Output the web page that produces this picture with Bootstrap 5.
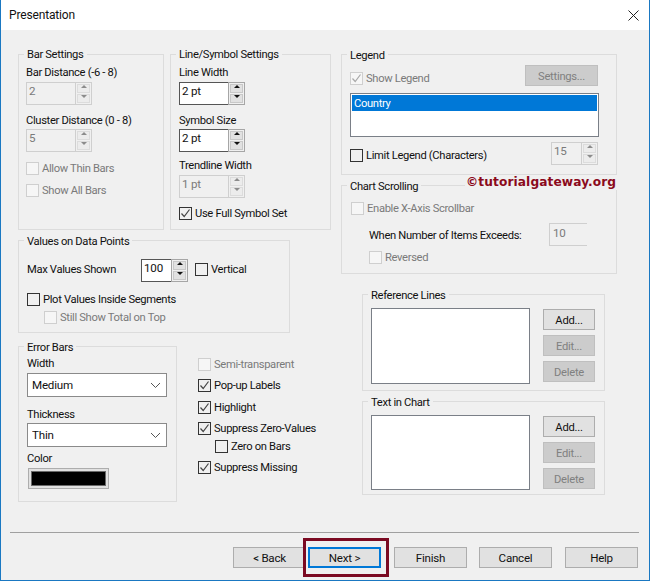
<!DOCTYPE html>
<html lang="en">
  <head>
    <meta charset="UTF-8" />
    <meta name="viewport" content="width=device-width, initial-scale=1.0" />
    <link
      rel="stylesheet"
      href="https://cdn.jsdelivr.net/npm/bootstrap@5.3.3/dist/css/bootstrap.min.css"
    />
    <title>Presentation</title>
    <style>
      html, body { margin: 0; background: #f0f0f0; }
      body { font-family: Roboto, "Liberation Sans", sans-serif; font-size: 11.2px; line-height: 16px; letter-spacing: -0.33px; color: #111; }
      .dlg { width: 650px; height: 581px; background: #f0f0f0; border: 1px solid #1a78c2; border-top: 0; overflow: hidden; }
      .dlg-head { height: 30px; background: #fff; padding: 0 10px 0 8px; }
      .dlg-title { font-size: 12px; letter-spacing: -0.15px; }
      .dlg-main { height: 502px; padding: 24px 0 0 17px; }
      .left-pane { width: 313px; }
      .right-pane { width: 276px; margin-left: 10px; }
      .grp { border: 1px solid #dcdcdc; }
      .grp-title { width: fit-content; height: 16px; margin: -8px 0 0 -3px; padding: 1px 3px 0; background: #f0f0f0; }
      .lbl { height: 16px; padding-top: 1px; white-space: nowrap; }
      .off { color: #7a7a7a; }

      .g-bar { width: 146px; height: 176px; padding-left: 7px; }
      .g-bar .grp-title { margin: -9px 0 0 -2px; }
      .g-line { width: 161px; height: 176px; margin-left: 6px; padding-left: 8px; }
      .g-line .grp-title { margin-top: -9px; }
      .g-values { width: 272px; height: 93px; margin-top: 10px; padding-left: 8px; }
      .g-error { width: 159px; height: 156px; padding-left: 8px; }
      .g-legend { height: 121px; padding-left: 8px; }
      .g-scroll { height: 89px; margin-top: 10px; padding-left: 9px; }
      .g-scroll .grp-title { margin-left: -4px; }
      .g-ref { width: 243px; height: 97px; margin: 20px 0 0 21px; padding-left: 8px; }
      .g-text { width: 243px; height: 94px; margin: 10px 0 0 21px; padding-left: 8px; }
      .error-row { margin-top: 13px; }
      .check-col { margin: 10px 0 0 21px; }

      .m1 { margin-top: 1px; }
      .m2 { margin-top: 2px; }
      .m3 { margin-top: 3px; }
      .m5 { margin-top: 5px; }
      .m6 { margin-top: 6px; }
      .m7 { margin-top: 7px; }
      .m8 { margin-top: 8px; }
      .m9 { margin-top: 9px; }
      .m10 { margin-top: 10px; }

      .chk-row { height: 16px; white-space: nowrap; }
      .chk-row span { padding-top: 2px; }
      .win-chk.form-check-input { width: 13px; height: 13px; margin: 0 3px 0 0; flex: none; border: 1px solid #333; border-radius: 0; background-color: transparent; opacity: 1; box-shadow: none; }
      .win-chk.form-check-input:checked[type=checkbox] { background-color: transparent; border-color: #333; background-size: 11px 11px; background-image: url("data:image/svg+xml,%3csvg xmlns='http://www.w3.org/2000/svg' viewBox='0 0 11 11'%3e%3cpath fill='none' stroke='%23444' stroke-width='1.2' d='M1.5 5.5l2.7 3L9.5 1.5'/%3e%3c/svg%3e"); }
      .win-chk.form-check-input:disabled { border-color: #cfcfcf; background-color: #f6f6f6; opacity: 1; }
      .win-chk.form-check-input:disabled:checked[type=checkbox] { border-color: #cfcfcf; background-color: #f6f6f6; background-image: url("data:image/svg+xml,%3csvg xmlns='http://www.w3.org/2000/svg' viewBox='0 0 11 11'%3e%3cpath fill='none' stroke='%23a8a8a8' stroke-width='1.2' d='M1.5 5.5l2.7 3L9.5 1.5'/%3e%3c/svg%3e"); }
      .chk-indent { margin-left: 18px; }
      .chk-indent-val { margin-left: 17px; }

      .spin { width: 66px; height: 23px; }
      .spin-small { width: 47px; }
      .spin-val { flex: 1; min-width: 0; width: 10px; height: 23px; padding: 0 0 5px 2px; font-size: 11.6px; letter-spacing: -0.2px; color: #111; background: #fff; border: 1px solid #555; border-right: 0; outline: 0; border-radius: 0; }
      .spin-arrows { width: 17px; height: 23px; padding: 1px; border: 1px solid #a6a6a6; background: #f0f0f0; }
      .spin-step { display: block; width: 100%; height: 9px; padding: 0; border: 1px solid #c8c8c8; background: #e1e1e1; }
      .spin-step + .spin-step { margin-top: 1px; }
      .spin-step::after { content: ""; display: block; width: 0; height: 0; margin: 0 auto; border-left: 3px solid transparent; border-right: 3px solid transparent; }
      .spin-up::after { border-bottom: 3px solid #111; }
      .spin-down::after { border-top: 3px solid #111; }
      .spin-off .spin-val { color: #7a7a7a; background: #f0f0f0; border-color: #cfcfcf; }
      .spin-off .spin-arrows { border-color: #cfcfcf; }
      .spin-off .spin-step { border-color: #dcdcdc; background: #ececec; }
      .spin-off .spin-up::after { border-bottom-color: #8c8c8c; }
      .spin-off .spin-down::after { border-top-color: #8c8c8c; }
      .spin-wide { width: 47px; }
      .exceeds-lbl { width: 180px; }
      .exceeds-box { width: 38px; height: 23px; padding: 0 0 4px 3px; font-size: 11.6px; letter-spacing: -0.2px; color: #7a7a7a; background: #f0f0f0; border: 1px solid #cfcfcf; border-right: 0; outline: 0; border-radius: 0; }

      .max-lbl { width: 114px; margin-bottom: 3px; }
      .vert-chk { margin: 0 0 3px 7px; }

      .win-select.form-select { width: 140px; height: 24px; padding: 0 20px 0 4px; font-size: 11.6px; line-height: 20px; letter-spacing: -0.2px; color: #111; background-color: #fff; background-size: 11px 7px; background-position: right 5px center; background-image: url("data:image/svg+xml,%3csvg xmlns='http://www.w3.org/2000/svg' viewBox='0 0 11 7'%3e%3cpath fill='none' stroke='%23555' stroke-width='1' d='M1 1l4.5 4.5L10 1'/%3e%3c/svg%3e"); border: 1px solid #8a8a8a; border-radius: 0; box-shadow: none; }
      .color-btn { width: 81px; height: 21px; margin: 2px 0 0 1px; padding: 2px; background: #e1e1e1; border: 1px solid #adadad; }
      .color-swatch { height: 100%; background: #000; border: 1px solid #6a6a6a; }

      .win-btn.btn { display: block; padding: 2px 0 0; font-size: 11.2px; line-height: 1; letter-spacing: -0.25px; color: #111; background: #e1e1e1; border: 1px solid #adadad; border-radius: 0; opacity: 1; }
      .win-btn.btn:disabled { color: #808080; background: #cccccc; border-color: #bfbfbf; opacity: 1; }
      .settings-btn.btn { width: 73px; height: 21px; }
      .legend-top { height: 21px; margin-top: 2px; padding-right: 18px; }
      .legend-chk { margin-top: 5px; }
      .legend-list { width: 249px; height: 44px; margin-top: 7px; padding: 1px; background: #fff; border: 1px solid #7a7f87; }
      .legend-item { height: 16px; margin: 0; padding: 1px 0 0 2px; color: #fff; background: #0078d7; }
      .legend-limit { height: 23px; margin-top: 5px; padding-right: 18px; }
      .limit-chk { margin-top: 5px; }

      .side-list { width: 159px; background: #fff; border: 1px solid #7a7f87; }
      .ref-list { height: 76px; }
      .txt-list { height: 75px; }
      .side-btns { width: 52px; margin: 1px 0 0 13px; }
      .side-btn.btn { width: 52px; height: 21px; margin-bottom: 5px; }

      .dlg-rule { height: 1px; margin: 0 10px 0 9px; background: #a0a0a0; }
      .dlg-foot { margin: 14px 0 0 232px; }
      .foot-btn.btn { width: 73px; height: 21px; font-size: 11.6px; }
      .next-btn.btn { margin: 0 13px 0 2px; border: 2px solid #0078d7; }
      .gap12 { margin-right: 12px; }
      .gap13 { margin-right: 13px; }

      .mark-box { position: absolute; left: 302px; top: 538px; width: 86px; height: 39px; border: 3px solid #7b0a22; pointer-events: none; }
      .watermark { position: absolute; left: 464px; top: 176px; height: 14px; padding: 0 2px 0 1px; font-family: "DejaVu Sans", sans-serif; font-size: 12.2px; font-weight: 700; line-height: 12px; letter-spacing: 0.1px; color: #8b0a1c; background: #f0f0f0; white-space: nowrap; }
    </style>
  </head>

  <body>
    <div class="dlg position-relative">
      <div class="dlg-head d-flex align-items-center justify-content-between">
        <span class="dlg-title">Presentation</span>
        <svg width="11" height="11" viewBox="0 0 11 11" aria-label="Close">
          <path d="M0.5 0.5L10.5 10.5M10.5 0.5L0.5 10.5" stroke="#222" stroke-width="1" fill="none" />
        </svg>
      </div>

      <div class="dlg-main d-flex">
        <div class="left-pane">
          <div class="d-flex">
            <div class="grp g-bar">
              <div class="grp-title">Bar Settings</div>
              <div class="lbl m2">Bar Distance (-6 - 8)</div>
              <div class="spin spin-off d-flex m2">
                <input class="spin-val" value="2" disabled />
                <div class="spin-arrows"><span class="spin-step spin-up"></span><span class="spin-step spin-down"></span></div>
              </div>
              <div class="lbl m7">Cluster Distance (0 - 8)</div>
              <div class="spin spin-off d-flex m1">
                <input class="spin-val" value="5" disabled />
                <div class="spin-arrows"><span class="spin-step spin-up"></span><span class="spin-step spin-down"></span></div>
              </div>
              <div class="chk-row d-flex align-items-center m8"><input type="checkbox" class="form-check-input win-chk" disabled /><span class="off">Allow Thin Bars</span></div>
              <div class="chk-row d-flex align-items-center m6"><input type="checkbox" class="form-check-input win-chk" disabled /><span class="off">Show All Bars</span></div>
            </div>

            <div class="grp g-line">
              <div class="grp-title">Line/Symbol Settings</div>
              <div class="lbl m2">Line Width</div>
              <div class="spin d-flex m2">
                <input class="spin-val" value="2 pt" />
                <div class="spin-arrows"><span class="spin-step spin-up"></span><span class="spin-step spin-down"></span></div>
              </div>
              <div class="lbl m7">Symbol Size</div>
              <div class="spin d-flex m1">
                <input class="spin-val" value="2 pt" />
                <div class="spin-arrows"><span class="spin-step spin-up"></span><span class="spin-step spin-down"></span></div>
              </div>
              <div class="lbl m5">Trendline Width</div>
              <div class="spin spin-off d-flex m2">
                <input class="spin-val" value="1 pt" disabled />
                <div class="spin-arrows"><span class="spin-step spin-up"></span><span class="spin-step spin-down"></span></div>
              </div>
              <div class="chk-row d-flex align-items-center m7"><input type="checkbox" class="form-check-input win-chk" checked /><span>Use Full Symbol Set</span></div>
            </div>
          </div>

          <div class="grp g-values">
            <div class="grp-title">Values on Data Points</div>
            <div class="d-flex align-items-center m10">
              <span class="lbl max-lbl">Max Values Shown</span>
              <div class="spin spin-small d-flex">
                <input class="spin-val" value="100" />
                <div class="spin-arrows"><span class="spin-step spin-up"></span><span class="spin-step spin-down"></span></div>
              </div>
              <div class="chk-row d-flex align-items-center vert-chk"><input type="checkbox" class="form-check-input win-chk" /><span>Vertical</span></div>
            </div>
            <div class="chk-row d-flex align-items-center m9"><input type="checkbox" class="form-check-input win-chk" /><span>Plot Values Inside Segments</span></div>
            <div class="chk-row d-flex align-items-center m2 chk-indent-val"><input type="checkbox" class="form-check-input win-chk" disabled /><span class="off">Still Show Total on Top</span></div>
          </div>

          <div class="d-flex error-row">
            <div class="grp g-error">
              <div class="grp-title">Error Bars</div>
              <div class="lbl">Width</div>
              <select class="form-select win-select m2"><option>Medium</option></select>
              <div class="lbl m9">Thickness</div>
              <select class="form-select win-select m1"><option>Thin</option></select>
              <div class="lbl m3">Color</div>
              <div class="color-btn"><div class="color-swatch"></div></div>
            </div>
            <div class="check-col">
              <div class="chk-row d-flex align-items-center"><input type="checkbox" class="form-check-input win-chk" disabled /><span class="off">Semi-transparent</span></div>
              <div class="chk-row d-flex align-items-center m5"><input type="checkbox" class="form-check-input win-chk" checked /><span>Pop-up Labels</span></div>
              <div class="chk-row d-flex align-items-center m6"><input type="checkbox" class="form-check-input win-chk" checked /><span>Highlight</span></div>
              <div class="chk-row d-flex align-items-center m5"><input type="checkbox" class="form-check-input win-chk" checked /><span>Suppress Zero-Values</span></div>
              <div class="chk-row d-flex align-items-center m2 chk-indent-val"><input type="checkbox" class="form-check-input win-chk" /><span>Zero on Bars</span></div>
              <div class="chk-row d-flex align-items-center m5"><input type="checkbox" class="form-check-input win-chk" checked /><span>Suppress Missing</span></div>
            </div>
          </div>
        </div>

        <div class="right-pane">
          <div class="grp g-legend">
            <div class="grp-title">Legend</div>
            <div class="legend-top d-flex justify-content-between align-items-start">
              <div class="chk-row d-flex align-items-center legend-chk"><input type="checkbox" class="form-check-input win-chk" checked disabled /><span class="off">Show Legend</span></div>
              <button class="btn win-btn settings-btn" disabled>Settings...</button>
            </div>
            <div class="legend-list"><div class="legend-item">Country</div></div>
            <div class="legend-limit d-flex justify-content-between align-items-start">
              <div class="chk-row d-flex align-items-center limit-chk"><input type="checkbox" class="form-check-input win-chk" /><span>Limit Legend (Characters)</span></div>
              <div class="spin spin-wide spin-off d-flex">
                <input class="spin-val" value="15" disabled />
                <div class="spin-arrows"><span class="spin-step spin-up"></span><span class="spin-step spin-down"></span></div>
              </div>
            </div>
          </div>

          <div class="grp g-scroll">
            <div class="grp-title">Chart Scrolling</div>
            <div class="chk-row d-flex align-items-center m6"><input type="checkbox" class="form-check-input win-chk" disabled /><span class="off">Enable X-Axis Scrollbar</span></div>
            <div class="d-flex align-items-center m7 chk-indent">
              <span class="lbl exceeds-lbl">When Number of Items Exceeds:</span>
              <input class="exceeds-box" value="10" disabled />
            </div>
            <div class="chk-row d-flex align-items-center m3 chk-indent"><input type="checkbox" class="form-check-input win-chk" disabled /><span class="off">Reversed</span></div>
          </div>

          <div class="grp g-ref">
            <div class="grp-title">Reference Lines</div>
            <div class="d-flex m5">
              <div class="side-list ref-list"></div>
              <div class="side-btns">
                <button class="btn win-btn side-btn">Add...</button>
                <button class="btn win-btn side-btn" disabled>Edit...</button>
                <button class="btn win-btn side-btn" disabled>Delete</button>
              </div>
            </div>
          </div>

          <div class="grp g-text">
            <div class="grp-title">Text in Chart</div>
            <div class="d-flex m5">
              <div class="side-list txt-list"></div>
              <div class="side-btns">
                <button class="btn win-btn side-btn">Add...</button>
                <button class="btn win-btn side-btn" disabled>Edit...</button>
                <button class="btn win-btn side-btn" disabled>Delete</button>
              </div>
            </div>
          </div>
        </div>
      </div>

      <div class="dlg-rule"></div>
      <div class="dlg-foot d-flex">
        <button class="btn win-btn foot-btn">&lt; Back</button>
        <button class="btn win-btn foot-btn next-btn">Next &gt;</button>
        <button class="btn win-btn foot-btn gap12">Finish</button>
        <button class="btn win-btn foot-btn gap13">Cancel</button>
        <button class="btn win-btn foot-btn">Help</button>
      </div>

      <div class="watermark">©tutorialgateway.org</div>
      <div class="mark-box"></div>
    </div>
    <script src="https://cdn.jsdelivr.net/npm/bootstrap@5.3.3/dist/js/bootstrap.bundle.min.js"></script>
  </body>
</html>
